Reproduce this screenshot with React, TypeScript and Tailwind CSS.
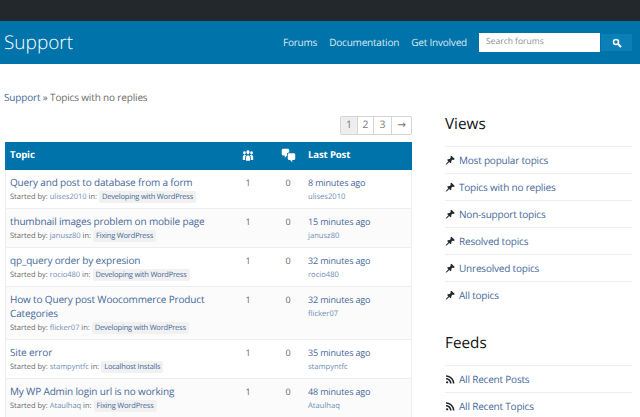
import React from "react";

const PIN = "M10.44 3.02l1.82-1.82 6.36 6.35-1.83 1.82c-1.05-.68-2.48-.57-3.41.36l-.75.75c-.92.93-1.04 2.35-.35 3.41l-1.83 1.82-2.41-2.41-2.8 2.79c-.42.42-3.38 2.71-3.8 2.29s1.86-3.39 2.28-3.81l2.79-2.79L4.1 9.36l1.83-1.82c1.05.69 2.48.57 3.4-.36l.75-.75c.93-.92 1.05-2.35.36-3.41z";
const RSS = "M14.92 18H18C18 9.32 10.82 2.25 2 2.25v3.02c7.12 0 12.92 5.71 12.92 12.73zm-5.44 0h3.08C12.56 12.27 7.82 7.6 2 7.6v3.02c2 0 3.87.77 5.29 2.16C8.7 14.17 9.48 16.03 9.48 18zm-5.35-.02c1.17 0 2.13-.93 2.13-2.09 0-1.15-.96-2.09-2.13-2.09-1.18 0-2.13.94-2.13 2.09 0 1.16.95 2.09 2.13 2.09z";
const CHAT = "M11 6h-.82C9.07 6 8 7.2 8 8.16V10l-3 3v-3H3c-1.1 0-2-.9-2-2V3c0-1.1.9-2 2-2h6c1.1 0 2 .9 2 2v3zm0 1h6c1.1 0 2 .9 2 2v5c0 1.1-.9 2-2 2h-2v3l-3-3h-1c-1.1 0-2-.9-2-2V9c0-1.1.9-2 2-2z";
const GROUPS = "M8.03 4.46c-.29 1.28.55 3.46 1.97 3.46 1.41 0 2.25-2.18 1.96-3.46-.22-.98-1.08-1.63-1.96-1.63-.89 0-1.74.65-1.97 1.63zm-4.13.9c-.25 1.08.47 2.93 1.67 2.93s1.92-1.85 1.67-2.93c-.19-.83-.92-1.39-1.67-1.39s-1.48.56-1.67 1.39zm8.86 0c-.25 1.08.47 2.93 1.67 2.93s1.92-1.85 1.67-2.93c-.19-.83-.92-1.39-1.67-1.39s-1.48.56-1.67 1.39zM10 8.92c-1.11.13-2.45 1-2.45 2.45V16h4.9v-4.63c0-1.45-1.34-2.32-2.45-2.45zM5.55 8.73c-.94.12-2.08.85-2.08 2.08V15h3.07v-3.63c0-1.03.47-1.82 1.11-2.35-.53-.15-1.43-.29-2.1-.29zm8.9 0c-.67 0-1.57.14-2.1.29.64.53 1.11 1.32 1.11 2.35V15h3.07v-4.19c0-1.23-1.14-1.96-2.08-2.08z";

function Icon({ d, className }: { d: string; className: string }) {
  return (
    <svg viewBox="0 0 20 20" className={className} fill="currentColor">
      <path d={d} />
    </svg>
  );
}

const topics = [
  { title: "Query and post to database from a form", by: "ulises2010", forum: "Developing with WordPress", time: "8 minutes ago", h: "h-[39px]" },
  { title: "thumbnail images problem on mobile page", by: "janusz80", forum: "Fixing WordPress", time: "15 minutes ago", h: "h-[39px]" },
  { title: "qp_query order by expresion", by: "rocio480", forum: "Developing with WordPress", time: "32 minutes ago", h: "h-[39px]" },
  { title: "How to Query post Woocommerce Product Categories", by: "flicker07", forum: "Developing with WordPress", time: "32 minutes ago", h: "h-[53px]" },
  { title: "Site error", by: "stampyntfc", forum: "Localhost Installs", time: "35 minutes ago", h: "h-[39px]" },
  { title: "My WP Admin login url is no working", by: "Ataulhaq", forum: "Fixing WordPress", time: "48 minutes ago", h: "h-[39px]" },
];

const views = ["Most popular topics", "Topics with no replies", "Non-support topics", "Resolved topics", "Unresolved topics", "All topics"];
const feeds = ["All Recent Posts", "All Recent Topics"];

function SideItem({ label, d }: { label: string; d: string }) {
  return (
    <div className="flex items-center h-[27px] border-b border-[#eeeeee] last:border-b-0">
      <Icon d={d} className="w-[10.5px] h-[10.5px] text-[#23282d] mr-[3.5px]" />
      <a className="text-[#46699a] text-[10px] tracking-[-0.2px]">{label}</a>
    </div>
  );
}

export default function App() {
  return (
    <div className="w-[640px] h-[417px] overflow-hidden bg-white font-['Open_Sans',sans-serif] [text-rendering:geometricPrecision]">
      <div className="h-[21px] bg-[#23282d]" />
      <header className="h-[43px] bg-[#0073aa] flex items-center text-white pl-[4px] pr-[8px]">
        <div className="text-[19px] font-light leading-none">Support</div>
        <nav className="ml-auto flex items-center gap-[12px] text-[10px] tracking-[-0.2px] font-medium text-[#dcebf3]">
          <a>Forums</a>
          <a>Documentation</a>
          <a>Get Involved</a>
        </nav>
        <div className="flex items-center ml-[12px]">
          <div className="w-[121px] h-[19px] bg-white flex items-center pl-[7px] text-[8.5px] text-[#8b8f94]">Search forums</div>
          <div className="w-[31px] h-[17px] bg-[#0a7fb8] flex items-center justify-center ml-[1px]">
            <svg viewBox="0 0 20 20" className="w-[10px] h-[10px]" fill="none" stroke="white">
              <circle cx="8" cy="8" r="5" strokeWidth="3" />
              <path d="M12 12l6 6" strokeWidth="4" />
            </svg>
          </div>
        </div>
      </header>

      <main className="flex pl-[5px] pr-[8px]">
        <div className="w-[407px] shrink-0">
          <div className="h-[52px] flex items-end pb-[11px] -ml-[1px] text-[10px] tracking-[-0.16px] text-[#6b6b6b]">
            <span><a className="text-[#46699a]">Support</a> » Topics with no replies</span>
          </div>
          <div className="flex justify-end h-[26px]">
            <div className="flex h-[19px] border border-[#d5d5d5] rounded-[2px] text-[10.4px] text-[#777777] text-center leading-[17px]">
              <span className="w-[17px] bg-[#eeeeee] border-r border-[#d5d5d5]">1</span>
              <span className="w-[16px] border-r border-[#d5d5d5]">2</span>
              <span className="w-[18px] border-r border-[#d5d5d5]">3</span>
              <span className="w-[19px] font-['DejaVu_Sans',sans-serif]">→</span>
            </div>
          </div>
          <div className="border-x border-[#eeeeee]">
            <div className="grid grid-cols-[223px_40px_40px_1fr] items-center h-[28px] pb-[1px] bg-[#0073aa] text-white text-[9.6px] tracking-[-0.15px] font-bold -mx-[1px]">
              <div className="pl-[5px]">Topic</div>
              <div className="flex justify-center"><Icon d={GROUPS} className="w-[16px] h-[16px]" /></div>
              <div className="flex justify-center"><Icon d={CHAT} className="w-[15px] h-[15px]" /></div>
              <div>Last Post</div>
            </div>
            {topics.map((t, i) => (
              <div key={t.title} className={`grid grid-cols-[222px_40px_40px_1fr] border-b border-[#eeeeee] pt-[5px] ${t.h} ${i % 2 === 0 ? "bg-white" : "bg-[#fbfbfb]"}`}>
                <div className="pl-[4px] pr-[3px]">
                  <a className="block text-[#46699a] text-[10px] tracking-[-0.16px] leading-[14px]">{t.title}</a>
                  <div className="flex items-center text-[7.5px] text-[#666666] mt-[2px] leading-[12px]">
                    <span>Started by:&nbsp;<a className="text-[#6f8db3]">{t.by}</a>&nbsp;in:&nbsp;</span>
                    <span className="bg-[#f1f1f1] rounded-[2px] px-[3px] text-[#46699a] font-medium tracking-[-0.2px]">{t.forum}</span>
                  </div>
                </div>
                <div className="pt-[1px] text-center text-[9px] leading-[13px] text-[#666666]">1</div>
                <div className="pt-[1px] text-center text-[9px] leading-[13px] text-[#666666]">0</div>
                <div className="pt-[1px]">
                  <a className="block text-[#46699a] text-[9px] tracking-[-0.15px] leading-[13px]">{t.time}</a>
                  <a className="block text-[#6f8db3] text-[7.6px] leading-[11px] mt-[3px]">{t.by}</a>
                </div>
              </div>
            ))}
          </div>
        </div>
        <aside className="ml-[33px] flex-1 pt-[50px]">
          <h3 className="text-[15.3px] leading-[20px] text-[#111111] h-[32px]">Views</h3>
          <div className="border-t border-[#eeeeee]">
            {views.map((v) => <SideItem key={v} label={v} d={PIN} />)}
          </div>
          <h3 className="text-[15.3px] leading-[20px] text-[#111111] mt-[24px] h-[32px]">Feeds</h3>
          <div className="border-t border-[#eeeeee]">
            {feeds.map((v) => <SideItem key={v} label={v} d={RSS} />)}
          </div>
        </aside>
      </main>
    </div>
  );
}
